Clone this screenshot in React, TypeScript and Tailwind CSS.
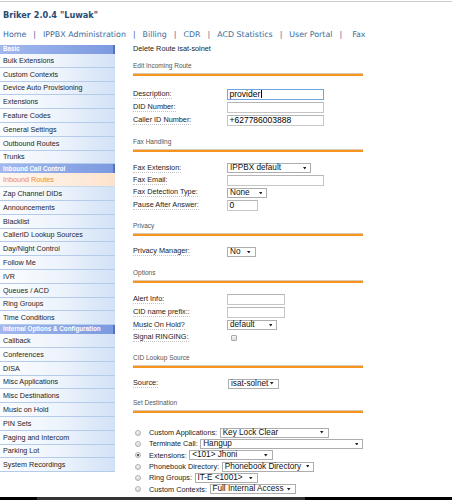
import React from "react";

const basic = [
  "Bulk Extensions",
  "Custom Contexts",
  "Device Auto Provisioning",
  "Extensions",
  "Feature Codes",
  "General Settings",
  "Outbound Routes",
  "Trunks",
];
const inbound = [
  "Inbound Routes",
  "Zap Channel DIDs",
  "Announcements",
  "Blacklist",
  "CallerID Lookup Sources",
  "Day/Night Control",
  "Follow Me",
  "IVR",
  "Queues / ACD",
  "Ring Groups",
  "Time Conditions",
];
const internal = [
  "Callback",
  "Conferences",
  "DISA",
  "Misc Applications",
  "Misc Destinations",
  "Music on Hold",
  "PIN Sets",
  "Paging and Intercom",
  "Parking Lot",
  "System Recordings",
];

function SideHeader({ children }: { children: React.ReactNode }) {
  return (
    <div className="h-[9px] flex items-center pl-[3px] bg-linear-to-r from-[#a2b8ee] to-[#7c9ae0] border-r-[2px] border-[#5673c0] text-white font-bold text-[6.3px] leading-none whitespace-nowrap overflow-hidden">
      {children}
    </div>
  );
}

function SideItem({ label, active }: { label: string; active?: boolean }) {
  return (
    <div
      className={
        active
          ? "h-[13.8px] flex items-center pl-[3px] border-b border-[#c9d9ec] bg-linear-to-r from-[#fff9f3] to-[#fde3cd] text-[#f0893a] text-[7.2px] leading-none whitespace-nowrap"
          : "h-[13.8px] flex items-center pl-[3px] border-b border-[#b4cce9] bg-linear-to-r from-[#fcfdff] via-[#eef4fc] to-[#d2e2f6] text-[#1e1e1e] text-[7.2px] leading-none whitespace-nowrap"
      }
    >
      {label}
    </div>
  );
}

function Section({ title, className }: { title: string; className: string }) {
  return (
    <div className={className}>
      <div className="h-[8px] leading-[8px] text-[6.5px] text-[#555] whitespace-nowrap">{title}</div>
      <div className="mt-[3.3px] w-[230px] h-[3px] border-t border-[#dccab6] bg-[#f7941d]" />
    </div>
  );
}

function Lbl({ children }: { children: React.ReactNode }) {
  return (
    <span className="text-[7.3px] leading-[8px] text-[#222] border-b border-dotted border-[#c4c4c4] whitespace-nowrap">
      {children}
    </span>
  );
}

function Row({ h, label, children }: { h: string; label: string; children?: React.ReactNode }) {
  return (
    <div className={"flex items-center " + h}>
      <div className="w-[94px] shrink-0 flex items-center">
        <Lbl>{label}</Lbl>
      </div>
      {children}
    </div>
  );
}

function Inp({ w, text, focus }: { w: string; text?: string; focus?: boolean }) {
  return (
    <div
      className={
        (focus ? "border-[#6fa4e2] " : "border-[#c6c6c6] border-t-[#b5b5b5] ") +
        "h-[11px] border bg-white text-[8.5px] leading-none flex items-center pl-[1.5px] text-black whitespace-nowrap " +
        w
      }
    >
      {text}
      {focus ? <span className="ml-[0.5px] w-[1px] h-[8px] bg-black" /> : null}
    </div>
  );
}

function Sel({ w, text }: { w: string; text: string }) {
  return (
    <div
      className={
        "h-[10px] border border-[#adadad] bg-white flex items-center justify-between pl-[2px] pr-[4px] text-[8.2px] leading-[8px] text-[#111] whitespace-nowrap " +
        w
      }
    >
      <span>{text}</span>
      <svg width="3.5" height="2.5" viewBox="0 0 7 5" className="shrink-0 ml-[2px]">
        <path d="M0 0h7L3.5 5z" fill="#222" />
      </svg>
    </div>
  );
}

function Radio({ checked }: { checked?: boolean }) {
  return (
    <div className="w-[6px] h-[6px] shrink-0 rounded-full border border-[#b0b0b0] bg-linear-to-b from-[#f6f6f6] to-[#d9d9d9] flex items-center justify-center">
      {checked ? <div className="w-[2px] h-[2px] rounded-full bg-[#333]" /> : null}
    </div>
  );
}

function RadioRow({
  label,
  checked,
  children,
}: {
  label: string;
  checked?: boolean;
  children: React.ReactNode;
}) {
  return (
    <div className="h-[11.4px] flex items-center pl-[2px]">
      <Radio checked={checked} />
      <span className="ml-[8px] mr-[2.5px] text-[7.3px] leading-none text-[#222] whitespace-nowrap">{label}</span>
      {children}
    </div>
  );
}

const navItems = ["Home", "IPPBX Administration", "Billing", "CDR", "ACD Statistics", "User Portal"];

export default function App() {
  return (
    <div className="w-[452px] h-[500px] bg-white flex flex-col overflow-hidden font-['Liberation_Sans',Arial,sans-serif]">
      <div className="mt-[1px] h-[1px] bg-[#cdcdcd] shrink-0" />
      <div className="mt-[8px] pl-[3px] h-[10px] leading-[10px] text-[8.2px] font-bold text-[#284a74] font-['DejaVu_Sans',Verdana,sans-serif] whitespace-nowrap">
        Briker 2.0.4 "Luwak"
      </div>
      <div className="mt-[10px] pl-[3px] h-[10px] flex items-center gap-[7px] text-[7.9px] leading-none text-[#3b6a9b] font-['DejaVu_Sans',Verdana,sans-serif] whitespace-nowrap">
        {navItems.map((n) => (
          <React.Fragment key={n}>
            <span>{n}</span>
            <span>|</span>
          </React.Fragment>
        ))}
        <span className="ml-[3px]">Fax</span>
      </div>
      <div className="mt-[5px] flex flex-1 min-h-0 items-start">
        <div className="w-[115px] shrink-0 flex flex-col">
          <SideHeader>Basic</SideHeader>
          {basic.map((b) => (
            <SideItem key={b} label={b} />
          ))}
          <SideHeader>Inbound Call Control</SideHeader>
          {inbound.map((b, i) => (
            <SideItem key={b} label={b} active={i === 0} />
          ))}
          <SideHeader>Internal Options &amp; Configuration</SideHeader>
          {internal.map((b) => (
            <SideItem key={b} label={b} />
          ))}
        </div>
        <div className="ml-[18px] flex flex-col w-[300px]">
          <div className="h-[8px] leading-[8px] text-[7.3px] text-[#222] whitespace-nowrap">Delete Route isat-solnet</div>

          <Section title="Edit Incoming Route" className="mt-[8.7px]" />
          <div className="mt-[12px] flex flex-col">
            <Row h="h-[13px]" label="Description:">
              <Inp w="w-[97px]" text="provider" focus />
            </Row>
            <Row h="h-[13px]" label="DID Number:">
              <Inp w="w-[97px]" />
            </Row>
            <Row h="h-[13px]" label="Caller ID Number:">
              <Inp w="w-[97px]" text="+627786003888" />
            </Row>
          </div>

          <Section title="Fax Handling" className="mt-[10.7px]" />
          <div className="mt-[10.15px] flex flex-col">
            <Row h="h-[12.3px]" label="Fax Extension:">
              <Sel w="w-[84px]" text="IPPBX default" />
            </Row>
            <Row h="h-[12.3px]" label="Fax Email:">
              <Inp w="w-[97px]" />
            </Row>
            <Row h="h-[12.3px]" label="Fax Detection Type:">
              <Sel w="w-[40px]" text="None" />
            </Row>
            <Row h="h-[12.3px]" label="Pause After Answer:">
              <Inp w="w-[31px]" text="0" />
            </Row>
          </div>

          <Section title="Privacy" className="mt-[10.65px]" />
          <div className="mt-[9.7px] flex flex-col">
            <Row h="h-[12px]" label="Privacy Manager:">
              <Sel w="w-[28.5px]" text="No" />
            </Row>
          </div>

          <Section title="Options" className="mt-[10.7px]" />
          <div className="mt-[10.65px] flex flex-col">
            <Row h="h-[12.7px]" label="Alert Info:">
              <Inp w="w-[58px]" />
            </Row>
            <Row h="h-[12.7px]" label="CID name prefix::">
              <Inp w="w-[58px]" />
            </Row>
            <Row h="h-[12.7px]" label="Music On Hold?">
              <Sel w="w-[50px]" text="default" />
            </Row>
            <Row h="h-[12.7px]" label="Signal RINGING:">
              <div className="ml-[4px] w-[6px] h-[6px] rounded-[1px] border border-[#a9a9a9] bg-linear-to-b from-[#f7f7f7] to-[#dcdcdc]" />
            </Row>
          </div>

          <Section title="CID Lookup Source" className="mt-[9.25px]" />
          <div className="mt-[9.8px] flex flex-col">
            <Row h="h-[12px]" label="Source:">
              <Sel w="ml-[1px] w-[50.5px]" text="isat-solnet" />
            </Row>
          </div>

          <Section title="Set Destination" className="mt-[9.5px]" />
          <div className="mt-[13.4px] flex flex-col">
            <RadioRow label="Custom Applications:">
              <Sel w="w-[109px]" text="Key Lock Clear" />
            </RadioRow>
            <RadioRow label="Terminate Call:">
              <Sel w="w-[163px]" text="Hangup" />
            </RadioRow>
            <RadioRow label="Extensions:" checked>
              <Sel w="w-[83.5px]" text="<101> Jhoni" />
            </RadioRow>
            <RadioRow label="Phonebook Directory:">
              <Sel w="w-[92.5px]" text="Phonebook Directory" />
            </RadioRow>
            <RadioRow label="Ring Groups:">
              <Sel w="w-[63px]" text="IT-E <1001>" />
            </RadioRow>
            <RadioRow label="Custom Contexts:">
              <Sel w="w-[86px]" text="Full Internal Access" />
            </RadioRow>
          </div>
        </div>
      </div>
      <div className="h-[3px] shrink-0 bg-black flex">
        <div className="ml-[37px] w-[268px] h-full bg-[#333]" />
      </div>
    </div>
  );
}
